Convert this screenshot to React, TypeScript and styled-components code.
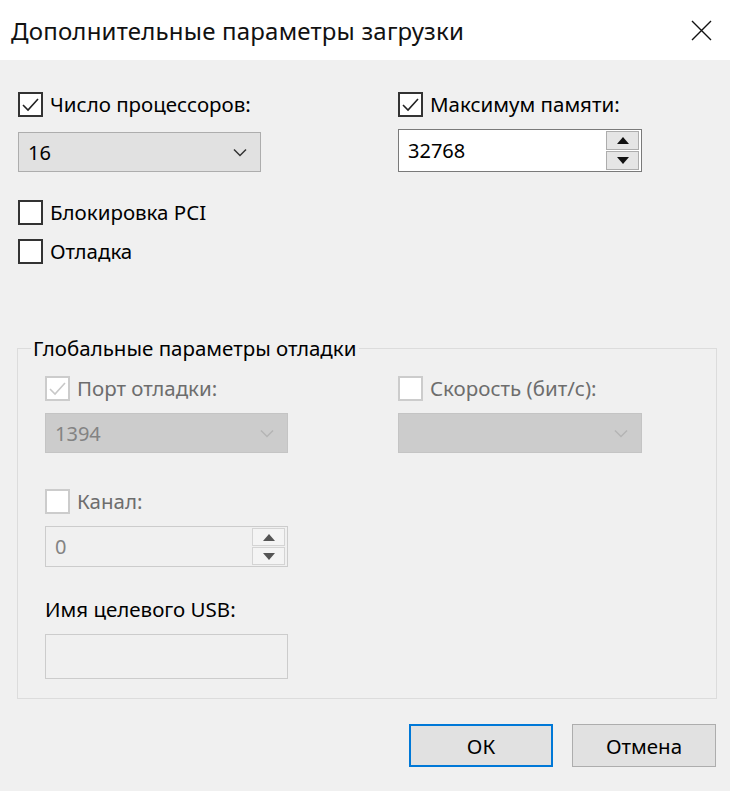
import React from "react";
import styled, { createGlobalStyle } from "styled-components";

const Global = createGlobalStyle`
  html, body { margin: 0; padding: 0; background: #f0f0f0; }
  body { font-family: "Noto Sans", "Open Sans", sans-serif; color: #000; }
`;

const Window = styled.div`
  width: 730px;
  height: 791px;
  background: #f0f0f0;
  display: flex;
  flex-direction: column;
  overflow: hidden;
`;

const TitleBar = styled.div`
  height: 60px;
  flex: none;
  background: #fff;
  display: flex;
  align-items: center;
  justify-content: space-between;
  padding: 0 18px 0 11px;
  box-sizing: border-box;
`;

const Title = styled.div`
  font-size: 24px;
  letter-spacing: 0.2px;
  color: #111;
`;

const Body = styled.div`
  padding: 32px 14px 0 17px;
  display: flex;
  flex-direction: column;
`;

const TopGrid = styled.div`
  display: grid;
  grid-template-columns: 243px 244px;
  column-gap: 137px;
  margin-left: 1px;
`;

const Col = styled.div<{ $gap: number }>`
  display: flex;
  flex-direction: column;
  gap: ${(p) => p.$gap}px;
`;

const CheckRow = styled.label<{ $disabled?: boolean }>`
  display: flex;
  align-items: center;
  gap: 7px;
  height: 25px;
  font-size: 20.5px;
  line-height: 25px;
  color: ${(p) => (p.$disabled ? "#6d6d6d" : "#000")};
  white-space: nowrap;
`;

const Box = styled.span<{ $disabled?: boolean }>`
  width: 25px;
  height: 25px;
  box-sizing: border-box;
  border: 2px solid ${(p) => (p.$disabled ? "#cccccc" : "#333")};
  background: #fff;
  display: flex;
  align-items: center;
  justify-content: center;
  flex: none;
`;

const Combo = styled.div<{ $disabled?: boolean }>`
  height: 40px;
  box-sizing: border-box;
  border: 1px solid ${(p) => (p.$disabled ? "#c4c4c4" : "#adadad")};
  background: ${(p) => (p.$disabled ? "#cccccc" : "#e1e1e1")};
  color: ${(p) => (p.$disabled ? "#838383" : "#000")};
  display: flex;
  align-items: center;
  justify-content: space-between;
  padding: 0 13px 0 9px;
  font-size: 20px;
`;

const Spin = styled.div<{ $disabled?: boolean }>`
  height: ${(p) => (p.$disabled ? 41 : 43)}px;
  box-sizing: border-box;
  border: 1px solid ${(p) => (p.$disabled ? "#cccccc" : "#7a7a7a")};
  background: ${(p) => (p.$disabled ? "#f0f0f0" : "#fff")};
  color: ${(p) => (p.$disabled ? "#838383" : "#000")};
  display: flex;
  align-items: stretch;
  font-size: 20px;
`;

const SpinValue = styled.div`
  flex: 1;
  display: flex;
  align-items: center;
  padding-left: 9px;
`;

const SpinButtons = styled.div`
  width: 33px;
  display: flex;
  flex-direction: column;
  padding: 1px 2px 1px 0;
  gap: 1px;
`;

const SpinBtn = styled.div<{ $disabled?: boolean }>`
  flex: 1;
  box-sizing: border-box;
  border: 1px solid ${(p) => (p.$disabled ? "#d4d4d4" : "#adadad")};
  background: ${(p) => (p.$disabled ? "#f4f4f4" : "#e5e5e5")};
  display: flex;
  align-items: center;
  justify-content: center;
`;

const Group = styled.fieldset`
  margin: 72px 0 0 0;
  border: 1px solid #dcdcdc;
  padding: 0;
  min-width: 0;
  width: 700px;
  box-sizing: border-box;
`;

const Legend = styled.legend`
  font-size: 20.5px;
  line-height: 24px;
  padding: 0 3px 0 2px;
  margin-left: 13px;
  color: #000;
`;

const GroupBody = styled.div`
  padding: 16px 0 19px 27px;
  display: flex;
  flex-direction: column;
  align-items: flex-start;
`;

const GroupGrid = styled.div`
  display: grid;
  grid-template-columns: 243px 244px;
  column-gap: 110px;
  align-items: start;
`;

const Section = styled(Col)<{ $top: number }>`
  width: 243px;
  margin-top: ${(p) => p.$top}px;
`;

const Plain = styled.div`
  font-size: 20.5px;
  height: 24px;
  display: flex;
  align-items: center;
`;

const TextBox = styled.div`
  height: 45px;
  box-sizing: border-box;
  border: 1px solid #cccccc;
  background: #f0f0f0;
`;

const LowerChecks = styled(Col)`
  margin: 28px 0 0 1px;
`;

const Buttons = styled.div`
  display: flex;
  justify-content: flex-end;
  gap: 19px;
  margin-top: 25px;
  width: 699px;
`;

const Button = styled.div<{ $default?: boolean }>`
  width: 144px;
  height: 43px;
  box-sizing: border-box;
  border: ${(p) => (p.$default ? "2px solid #0078d7" : "1px solid #adadad")};
  background: #e1e1e1;
  display: flex;
  align-items: center;
  justify-content: center;
  font-size: 20.5px;
`;

const Check = ({ color }: { color: string }) => (
  <svg width="19" height="19" viewBox="0 0 19 19">
    <path d="M2 10 L7 15 L17 4" fill="none" stroke={color} strokeWidth="1.6" />
  </svg>
);

const Chevron = ({ color }: { color: string }) => (
  <svg width="14" height="9" viewBox="0 0 14 9">
    <path d="M1 1.5 L7 7.5 L13 1.5" fill="none" stroke={color} strokeWidth="1.5" />
  </svg>
);

const Tri = ({ up, color }: { up?: boolean; color: string }) => (
  <svg width="12" height="7" viewBox="0 0 12 7">
    <path d={up ? "M0 7 L6 0 L12 7 Z" : "M0 0 L12 0 L6 7 Z"} fill={color} />
  </svg>
);

function CheckBox({
  label,
  checked,
  disabled,
}: {
  label: string;
  checked?: boolean;
  disabled?: boolean;
}) {
  return (
    <CheckRow $disabled={disabled}>
      <Box $disabled={disabled}>
        {checked && <Check color={disabled ? "#c8c8c8" : "#222"} />}
      </Box>
      {label}
    </CheckRow>
  );
}

function SpinBox({ value, disabled }: { value: string; disabled?: boolean }) {
  const c = disabled ? "#555" : "#111";
  return (
    <Spin $disabled={disabled}>
      <SpinValue>{value}</SpinValue>
      <SpinButtons>
        <SpinBtn $disabled={disabled}>
          <Tri up color={c} />
        </SpinBtn>
        <SpinBtn $disabled={disabled}>
          <Tri color={c} />
        </SpinBtn>
      </SpinButtons>
    </Spin>
  );
}

export default function App() {
  return (
    <Window>
      <Global />
      <TitleBar>
        <Title>Дополнительные параметры загрузки</Title>
        <svg width="21" height="21" viewBox="0 0 21 21">
          <path d="M1 1 L20 20 M20 1 L1 20" stroke="#111" strokeWidth="1.4" />
        </svg>
      </TitleBar>
      <Body>
        <TopGrid>
          <Col $gap={15}>
            <CheckBox label="Число процессоров:" checked />
            <Combo>
              <span>16</span>
              <Chevron color="#333" />
            </Combo>
          </Col>
          <Col $gap={12}>
            <CheckBox label="Максимум памяти:" checked />
            <SpinBox value="32768" />
          </Col>
        </TopGrid>
        <LowerChecks $gap={14}>
          <CheckBox label="Блокировка PCI" />
          <CheckBox label="Отладка" />
        </LowerChecks>
        <Group>
          <Legend>Глобальные параметры отладки</Legend>
          <GroupBody>
            <GroupGrid>
              <Col $gap={12}>
                <CheckBox label="Порт отладки:" checked disabled />
                <Combo $disabled>
                  <span>1394</span>
                  <Chevron color="#b4b4b4" />
                </Combo>
              </Col>
              <Col $gap={12}>
                <CheckBox label="Скорость (бит/с):" disabled />
                <Combo $disabled>
                  <span />
                  <Chevron color="#b4b4b4" />
                </Combo>
              </Col>
            </GroupGrid>
            <Section $gap={12} $top={36}>
              <CheckBox label="Канал:" disabled />
              <SpinBox value="0" disabled />
            </Section>
            <Section $gap={13} $top={30}>
              <Plain>Имя целевого USB:</Plain>
              <TextBox />
            </Section>
          </GroupBody>
        </Group>
        <Buttons>
          <Button $default>ОК</Button>
          <Button>Отмена</Button>
        </Buttons>
      </Body>
    </Window>
  );
}
